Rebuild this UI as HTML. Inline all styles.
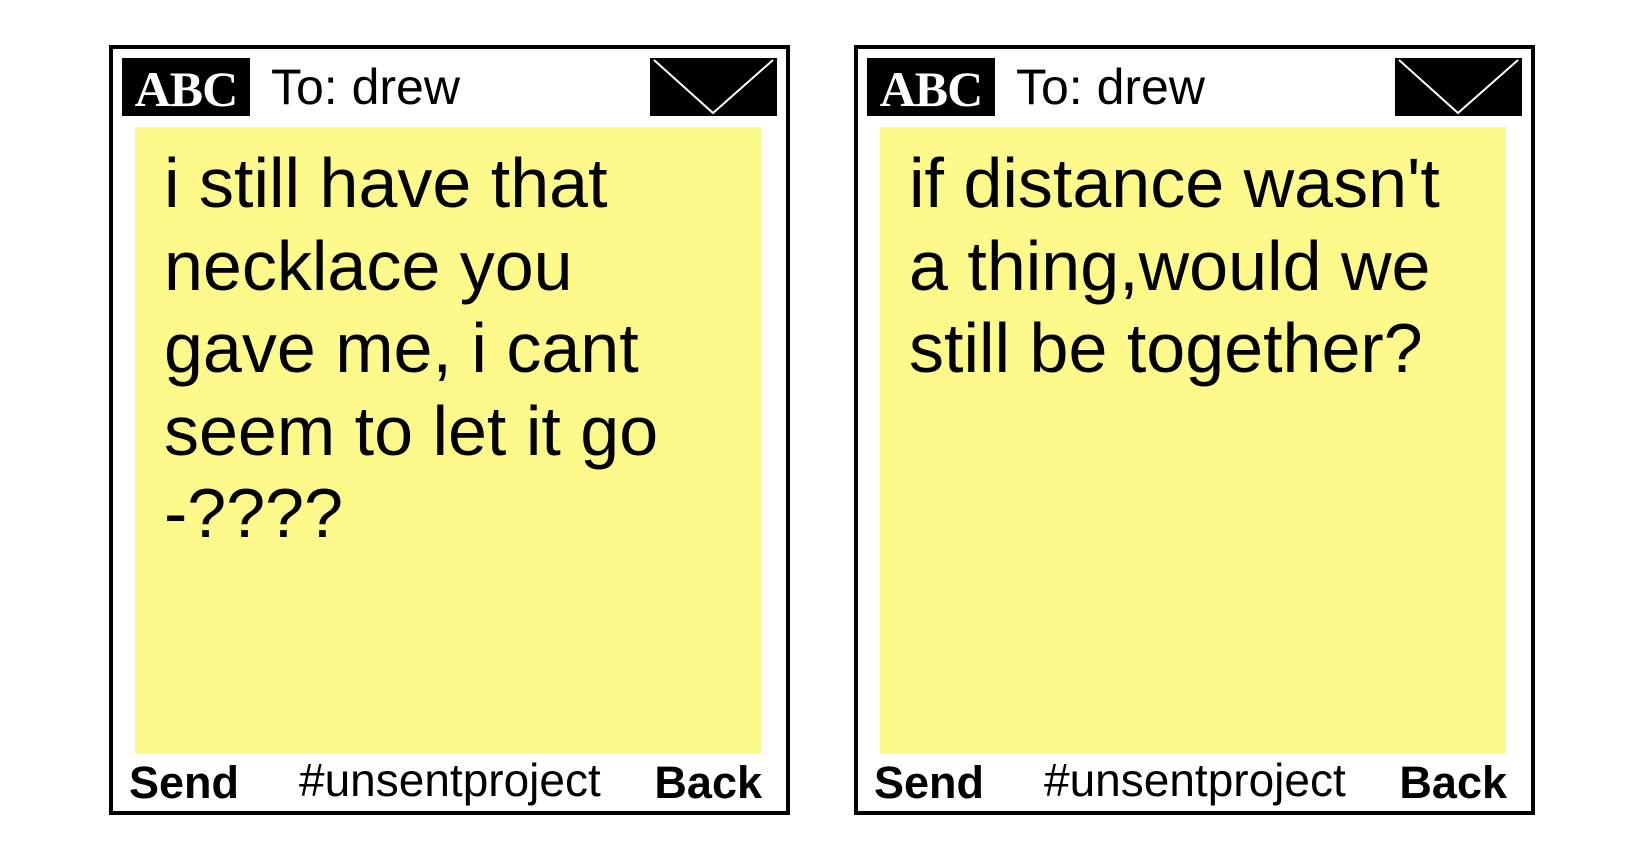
<!DOCTYPE html>
<html><head><style>
body{margin:0;width:1650px;height:846px;background:#fff;position:relative;overflow:hidden;font-family:"Liberation Sans",sans-serif;}
.box{position:absolute;top:45px;width:673px;height:762px;border:4px solid #000;box-sizing:content-box;}
.abs{position:absolute;}
.abc{left:9px;top:9px;width:128px;height:58px;background:#000;color:#fff;font-family:"Liberation Serif",serif;font-weight:bold;font-size:50px;line-height:62px;text-align:center;letter-spacing:-1px;}
.to{left:158px;top:8px;font-size:50px;line-height:60px;}
.env{left:537px;top:9px;width:127px;height:58px;background:#000;}
.yel{left:22px;top:78px;width:626px;height:627px;background:#fdf98a;}
.msg{left:51px;top:93px;font-size:70px;line-height:82.5px;white-space:pre;}
.send{left:16px;top:709px;font-weight:bold;font-size:45px;line-height:50px;}
.tag{left:186px;top:706px;font-size:46px;line-height:50px;}
.back{right:24px;top:709px;font-weight:bold;font-size:45px;line-height:50px;}
</style></head><body>
<div class="box" style="left:109px">
<div class="abs abc">ABC</div>
<div class="abs to">To: drew</div>
<div class="abs env"><svg width="127" height="58"><polyline points="4,2 63,55 123,2" fill="none" stroke="#fff" stroke-width="2"/></svg></div>
<div class="abs yel"></div>
<div class="abs msg">i still have that
necklace you
gave me, i cant
seem to let it go
-????</div>
<div class="abs send">Send</div>
<div class="abs tag">#unsentproject</div>
<div class="abs back">Back</div>
</div>
<div class="box" style="left:854px">
<div class="abs abc">ABC</div>
<div class="abs to">To: drew</div>
<div class="abs env"><svg width="127" height="58"><polyline points="4,2 63,55 123,2" fill="none" stroke="#fff" stroke-width="2"/></svg></div>
<div class="abs yel"></div>
<div class="abs msg">if distance wasn't
a thing,would we
still be together?</div>
<div class="abs send">Send</div>
<div class="abs tag">#unsentproject</div>
<div class="abs back">Back</div>
</div>
</body></html>
